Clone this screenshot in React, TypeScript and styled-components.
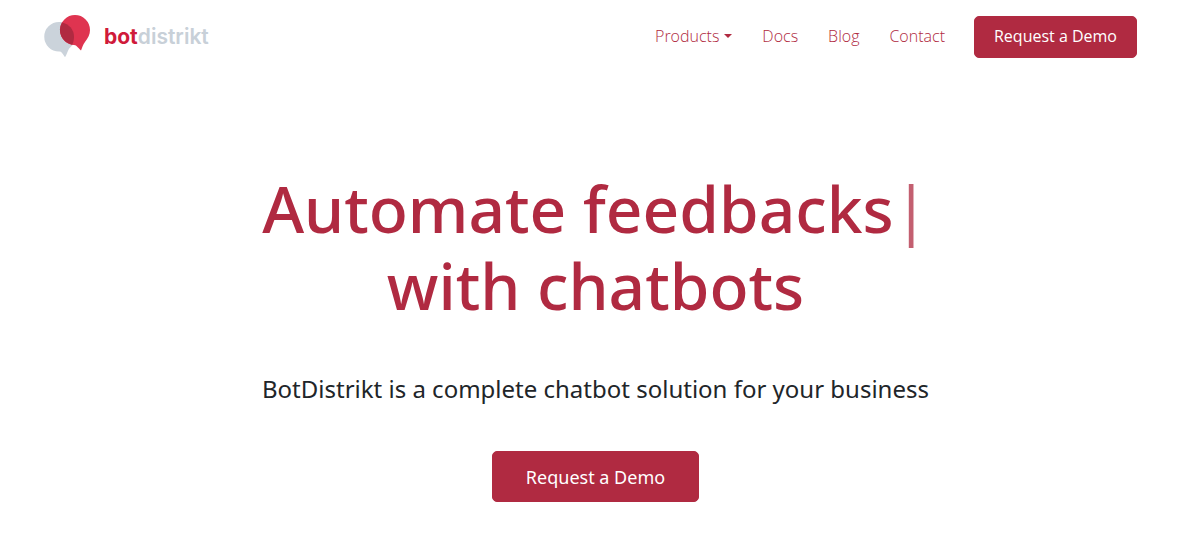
import React from "react";
import styled, { createGlobalStyle } from "styled-components";

const brand = "#b02a41";

const GlobalStyle = createGlobalStyle`
  *, *::before, *::after { box-sizing: border-box; }
  body {
    margin: 0;
    background: #fff;
    color: #212529;
    font: 400 16px/24px "Noto Sans", sans-serif;
  }
`;

const Header = styled.header`
  display: flex;
  align-items: center;
  justify-content: space-between;
  padding: 13px 54px 13px 40px;
`;

const Logo = styled.a`
  display: flex;
  align-items: center;
  gap: 12px;
  color: #d01a3a;
  text-decoration: none;
`;

const LogoMark = styled.svg`
  display: block;
  width: 52px;
  height: 48px;
`;

const Wordmark = styled.span`
  font: 700 21px/28px Inter, sans-serif;
`;

const WordmarkTail = styled.span`
  color: #c8d0d8;
  font-weight: 600;
`;

const Nav = styled.nav`
  display: flex;
  align-items: center;
  gap: 29px;
`;

const NavLinks = styled.div`
  display: flex;
  gap: 30px;
  padding-bottom: 2px;
`;

const NavLink = styled.a`
  display: inline-flex;
  align-items: center;
  gap: 5px;
  color: ${brand};
  font-family: "Open Sans", sans-serif;
  font-weight: 300;
  text-decoration: none;
`;

const Caret = styled.span`
  border: 4px solid transparent;
  border-top-color: currentColor;
  border-bottom: 0;
`;

const Button = styled.button<{ $large?: boolean }>`
  padding: ${(p) => (p.$large ? "13px 33px 11px" : "7px 19px 9px")};
  border: 1px solid ${brand};
  border-radius: 5px;
  background: ${brand};
  color: #fff;
  font: ${(p) =>
    p.$large
      ? '400 18px/25px "Noto Sans", sans-serif'
      : '400 16px/24px "Open Sans", sans-serif'};
  cursor: pointer;
`;

const Hero = styled.main`
  display: flex;
  flex-direction: column;
  align-items: center;
  padding: 96px 24px 56px;
  text-align: center;
`;

const Title = styled.h1`
  margin: 0;
  color: ${brand};
  font: 500 64px/77px "Noto Sans", sans-serif;
`;

const Cursor = styled.span`
  font-weight: 400;
  opacity: 0.75;
`;

const Lead = styled.p`
  margin: 47px 0 44px;
  font-size: 24px;
  line-height: 36px;
`;

export default function App() {
  return (
    <>
      <GlobalStyle />
      <Header>
        <Logo href="/" aria-label="botdistrikt">
          <LogoMark viewBox="0 1 52 48" aria-hidden="true">
            <path d="M19 10a14.6 14.6 0 0 0 0 29.500h.5c2 0 3 2 5.500 5.800 2-3 2.500-6 4-8.500A14.800 14.800 0 0 0 19 10z" fill="#cbd3db" />
            <path d="M35 3a15 15 0 0 0-15 15c0 9 7 14.700 14 15 3 .2 4 3 7 5.500 1-2.500 2-6 4-8.500 3-4 5-7.500 5-12A15 15 0 0 0 35 3z" fill="#df3450" />
            <path d="M22 10.400A14.800 14.800 0 0 1 34 24.500c0 3.200-.6 5.900-1.800 8.200A15 15 0 0 1 22 10.400z" fill="#b02a41" />
          </LogoMark>
          <Wordmark>
            bot<WordmarkTail>distrikt</WordmarkTail>
          </Wordmark>
        </Logo>
        <Nav aria-label="Main">
          <NavLinks>
            <NavLink href="#products">Products<Caret /></NavLink>
            <NavLink href="#docs">Docs</NavLink>
            <NavLink href="#blog">Blog</NavLink>
            <NavLink href="#contact">Contact</NavLink>
          </NavLinks>
          <Button type="button">Request a Demo</Button>
        </Nav>
      </Header>
      <Hero>
        <Title>
          Automate feedbacks<Cursor>|</Cursor>
          <br />
          with chatbots
        </Title>
        <Lead>BotDistrikt is a complete chatbot solution for your business</Lead>
        <Button type="button" $large>Request a Demo</Button>
      </Hero>
    </>
  );
}
